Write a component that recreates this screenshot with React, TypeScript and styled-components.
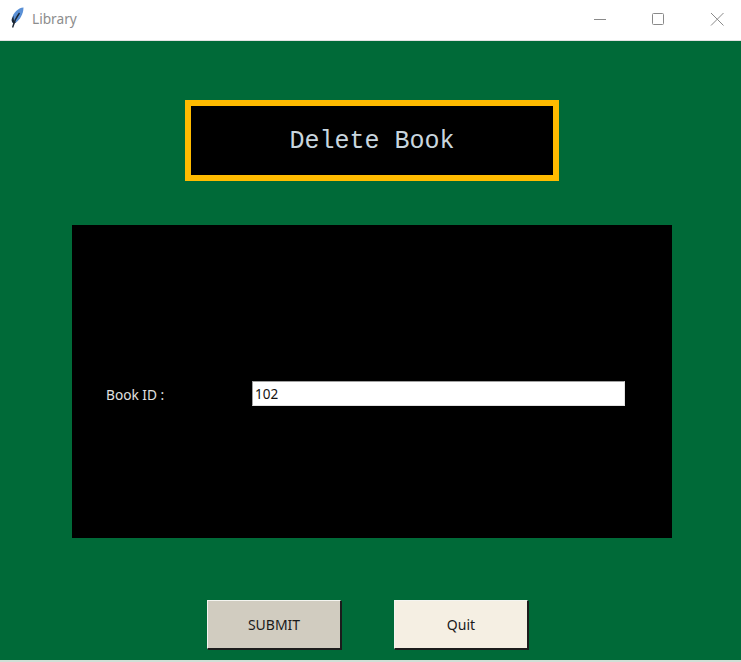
import React from "react";
import styled, { createGlobalStyle } from "styled-components";

const Global = createGlobalStyle`
  html, body { margin: 0; padding: 0; background: #fff; }
  body { font-family: "Noto Sans", "Open Sans", sans-serif; }
`;

const Window = styled.div`
  width: 741px;
  height: 662px;
  display: flex;
  flex-direction: column;
  overflow: hidden;
  background: #fff;
`;

const TitleBar = styled.header`
  height: 40px;
  flex: none;
  display: flex;
  align-items: center;
  background: #fff;
  border-bottom: 1px solid #e2e2e2;
`;

const AppIcon = styled.svg`
  width: 16px;
  height: 22px;
  margin-left: 9px;
  margin-top: -4px;
  flex: none;
`;

const AppTitle = styled.span`
  margin-left: 7px;
  font-size: 13.7px;
  color: #8d8d8d;
  line-height: 20px;
  margin-top: -3px;
`;

const WindowControls = styled.div`
  margin-left: auto;
  display: flex;
  align-items: center;
  margin-top: -3px;
`;

const ControlIcon = styled.svg`
  width: 58.5px;
  height: 16px;
  display: block;
  fill: none;
  stroke: #8a8a8a;
  stroke-width: 1;
`;

const Body = styled.main`
  flex: 1;
  display: flex;
  flex-direction: column;
  align-items: flex-start;
  background: #006a38;
  padding-top: 59px;
  border-bottom: 2px solid #cfe0d6;
`;

const Heading = styled.div`
  box-sizing: border-box;
  width: 374px;
  height: 81px;
  margin-left: 185px;
  border: 6px solid #ffbb00;
  background: #000;
  display: flex;
  align-items: center;
  justify-content: center;
  padding-top: 3px;
`;

const HeadingText = styled.h1`
  margin: 0;
  font-family: "Liberation Mono", monospace;
  font-weight: 400;
  font-size: 25px;
  color: #c9d6de;
  line-height: 30px;
`;

const Panel = styled.section`
  box-sizing: border-box;
  width: 600px;
  height: 313px;
  margin: 44px 0 0 72px;
  background: #000;
  display: flex;
  align-items: center;
  padding: 24px 0 0 34px;
`;

const FieldLabel = styled.label`
  width: 146px;
  flex: none;
  font-size: 13.7px;
  line-height: 20px;
  color: #e0e0e0;
  margin-top: 2px;
`;

const FieldInput = styled.input`
  box-sizing: border-box;
  width: 373px;
  height: 25px;
  padding: 0 0 0 2px;
  margin: 0;
  border: 1px solid #a0a0a0;
  border-right-color: #e3e3e3;
  border-bottom-color: #e3e3e3;
  border-radius: 0;
  outline: none;
  background: #fff;
  color: #111;
  font-family: inherit;
  font-size: 13.5px;
`;

const ButtonRow = styled.div`
  display: flex;
  gap: 53px;
  margin: 62px 0 0 207px;
`;

const ActionButton = styled.button<{ $bg: string }>`
  box-sizing: border-box;
  width: 134px;
  height: 49px;
  padding: 0 0 1px;
  border: 1px solid;
  border-color: #f4f4f0 #1c1c1c #1c1c1c #f4f4f0;
  box-shadow: 1px 1px 0 #1c1c1c;
  border-radius: 0;
  background: ${(p) => p.$bg};
  color: #1a1a1a;
  font-family: inherit;
  font-size: 14px;
`;

export default function App() {
  return (
    <>
      <Global />
      <Window>
        <TitleBar>
          <AppIcon viewBox="0 0 16 22">
            <path d="M14.5 0.5 C9 1 4.2 5.5 2.8 12 C2.2 15.5 4.4 17.2 7 15.6 C11 12.5 14.4 7 14.5 0.5 Z" fill="#5a90d6" />
            <path d="M2.8 12 C2.2 15.5 4.4 17.2 7 15.6 C5.4 15 4.4 13.4 4.6 8.5 Z" fill="#1d2733" />
            <path d="M10.5 6 C7.5 10 5 14.5 3.6 20.5" fill="none" stroke="#1d2733" strokeWidth="1.3" />
          </AppIcon>
          <AppTitle>Library</AppTitle>
          <WindowControls>
            <ControlIcon viewBox="0 0 58.5 16">
              <path d="M28 8.5 H40" />
            </ControlIcon>
            <ControlIcon viewBox="0 0 58.5 16">
              <rect x="28.5" y="2.5" width="11" height="11" rx="1" />
            </ControlIcon>
            <ControlIcon viewBox="0 0 58.5 16">
              <path d="M28 2 L40.5 14.5 M40.5 2 L28 14.5" />
            </ControlIcon>
          </WindowControls>
        </TitleBar>
        <Body>
          <Heading>
            <HeadingText>Delete Book</HeadingText>
          </Heading>
          <Panel>
            <FieldLabel htmlFor="book-id">Book ID :</FieldLabel>
            <FieldInput id="book-id" defaultValue="102" />
          </Panel>
          <ButtonRow>
            <ActionButton $bg="#d1ccc0">SUBMIT</ActionButton>
            <ActionButton $bg="#f5efe3">Quit</ActionButton>
          </ButtonRow>
        </Body>
      </Window>
    </>
  );
}
